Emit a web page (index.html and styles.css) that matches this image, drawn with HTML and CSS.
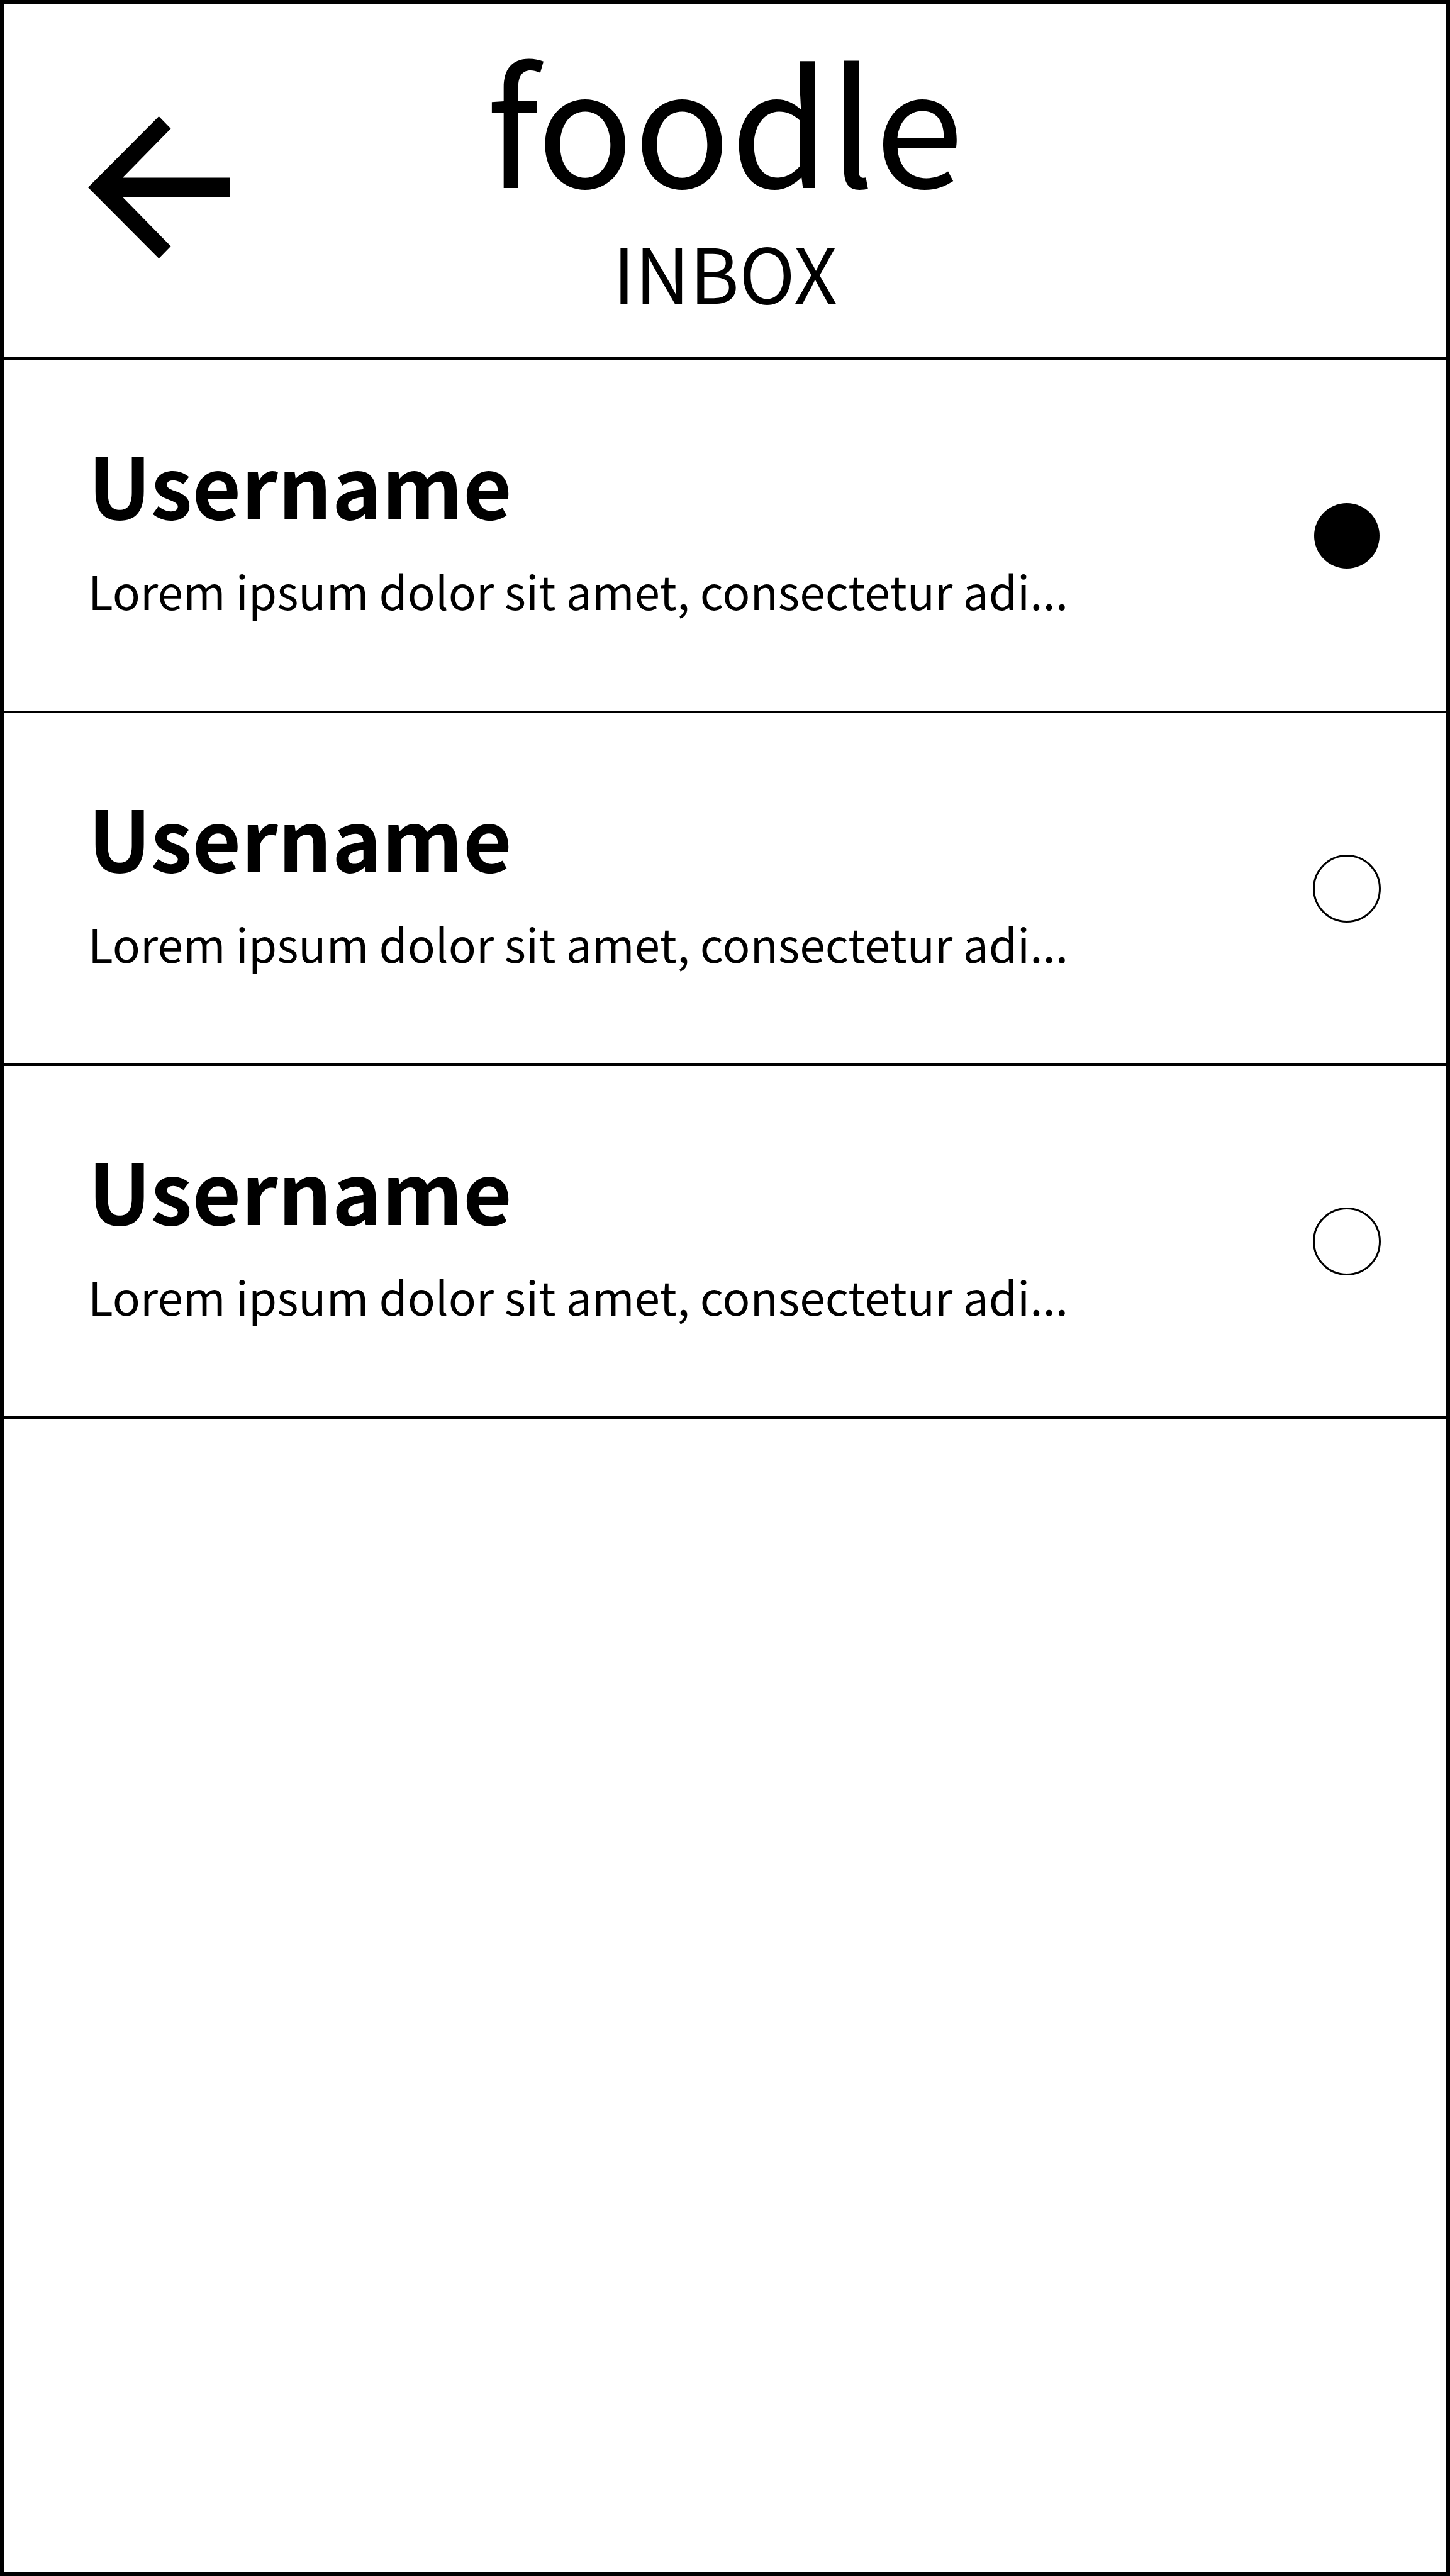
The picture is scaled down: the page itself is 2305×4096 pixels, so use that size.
FILE: index.html
```html
<!DOCTYPE html>
<html lang="en">
<head>
  <meta charset="utf-8">
  <meta name="viewport" content="width=device-width, initial-scale=1">
  <title>foodle – Inbox</title>
  <link rel="stylesheet" href="styles.css">
</head>
<body>
  <div class="screen">
    <header class="header">
      <a class="back" href="#" aria-label="Back">
        <svg class="back-icon" viewBox="0 0 225 226" aria-hidden="true">
          <path d="M0 113 112.5 0 131.5 19.5 55 97.5H225V128.5H55L131.5 206.5 112.5 226Z"/>
        </svg>
      </a>
      <div class="heading">
        <h1 class="brand">foodle</h1>
        <h2 class="title">INBOX</h2>
      </div>
    </header>
    <main>
      <ul class="messages">
        <li>
          <label class="message">
            <span class="message-text">
              <span class="username">Username</span>
              <span class="preview">Lorem ipsum dolor sit amet, consectetur adi...</span>
            </span>
            <input class="marker" type="radio" name="message" checked>
          </label>
        </li>
        <li>
          <label class="message">
            <span class="message-text">
              <span class="username">Username</span>
              <span class="preview">Lorem ipsum dolor sit amet, consectetur adi...</span>
            </span>
            <input class="marker" type="radio" name="message">
          </label>
        </li>
        <li>
          <label class="message">
            <span class="message-text">
              <span class="username">Username</span>
              <span class="preview">Lorem ipsum dolor sit amet, consectetur adi...</span>
            </span>
            <input class="marker" type="radio" name="message">
          </label>
        </li>
      </ul>
    </main>
  </div>
</body>
</html>
```

FILE: styles.css
```css
* {
  box-sizing: border-box;
}

body {
  margin: 0;
  background: #fff;
  color: #000;
  font-family: "Noto Sans CJK SC", "Open Sans", sans-serif;
}

.screen {
  min-height: 100vh;
  border: 6px solid #000;
}

.header {
  display: grid;
  grid-template-columns: 1fr auto 1fr;
  align-items: center;
  padding: 22px 134px 0;
  border-bottom: 6px solid #000;
}

.back {
  justify-self: start;
  color: inherit;
}

.back-icon {
  display: block;
  width: 225px;
  fill: currentColor;
}

.heading {
  display: flex;
  flex-direction: column;
  gap: 55px;
  padding: 32px 0 76px;
  text-align: center;
}

.brand,
.title {
  margin: 0;
  font-weight: 400;
}

.brand {
  font-size: 254px;
  line-height: 256px;
}

.title {
  font-size: 120px;
  line-height: 120px;
}

.messages {
  margin: 0;
  padding: 0;
  list-style: none;
}

.message {
  display: flex;
  align-items: center;
  justify-content: space-between;
  gap: 50px;
  padding: 0 104px 0 134px;
  border-bottom: 4px solid #000;
}

.message-text {
  display: flex;
  flex-direction: column;
  gap: 50px;
  min-width: 0;
  padding: 125px 0 142px;
}

.username {
  font-size: 134px;
  font-weight: 700;
  line-height: 140px;
}

.preview {
  font-size: 73px;
  line-height: 100px;
}

.marker {
  flex: none;
  appearance: none;
  width: 108px;
  height: 108px;
  margin: 0;
  border: 3px solid #000;
  border-radius: 50%;
}

.marker:checked {
  border: 2px solid transparent;
  background: #000 padding-box;
}
```
